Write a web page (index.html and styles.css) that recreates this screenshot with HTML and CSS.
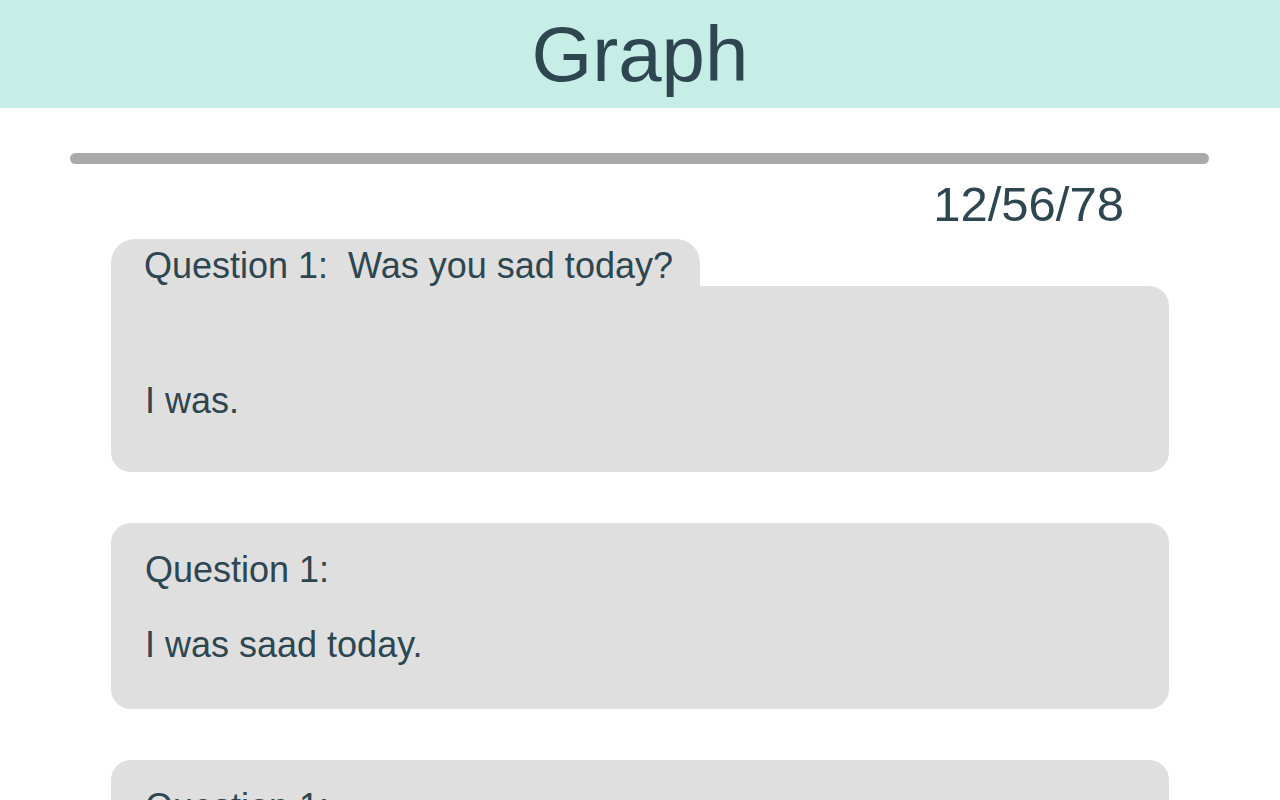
FILE: index.html
```html
<!DOCTYPE html>
<html lang="en">
<head>
<meta charset="utf-8">
<title>Graph</title>
<link rel="stylesheet" href="styles.css">
</head>
<body>
<header class="header">Graph</header>
<main class="main">
  <div class="divider"></div>
  <div class="date">12/56/78</div>
  <section class="entry">
    <div class="entry-tab">Question 1:&nbsp; Was you sad today?</div>
    <div class="entry-body entry-body--tabbed">
      <p class="answer">I was.</p>
    </div>
  </section>
  <section class="entry">
    <div class="entry-body">
      <p class="question">Question 1:</p>
      <p class="answer">I was saad today.</p>
    </div>
  </section>
  <section class="entry">
    <div class="entry-body">
      <p class="question">Question 1:</p>
      <p class="answer">I was saad today.</p>
    </div>
  </section>
</main>
</body>
</html>
```

FILE: styles.css
```css
html, body {
  margin: 0;
  padding: 0;
  background: #ffffff;
}
body {
  font-family: "Liberation Sans", Arial, sans-serif;
  color: #2d4650;
}
.header {
  height: 108px;
  line-height: 108px;
  background: #c6eee6;
  text-align: center;
  font-size: 78px;
}
.main {
  padding: 45px 71px 40px 70px;
}
.divider {
  height: 11px;
  border-radius: 6px;
  background: #aaaaaa;
}
.date {
  margin-top: 12px;
  padding-right: 85px;
  text-align: right;
  font-size: 49px;
  line-height: 56px;
}
.entry {
  margin: 7px 40px 51px 41px;
  font-size: 36px;
  line-height: 41px;
}
.entry + .entry {
  margin-top: 0;
}
.entry-tab {
  display: inline-block;
  vertical-align: top;
  height: 47px;
  box-sizing: border-box;
  padding: 6px 27px 0 33px;
  background: #dfdfdf;
  border-radius: 24px 24px 0 0;
}
.entry-body {
  background: #dfdfdf;
  border-radius: 20px;
  padding: 26px 34px 44px 34px;
  min-height: 186px;
  box-sizing: border-box;
}
.entry-body--tabbed {
  border-top-left-radius: 0;
  padding-top: 94px;
  padding-bottom: 51px;
}
.question, .answer {
  margin: 0;
}
.question + .answer {
  margin-top: 34px;
}
```
